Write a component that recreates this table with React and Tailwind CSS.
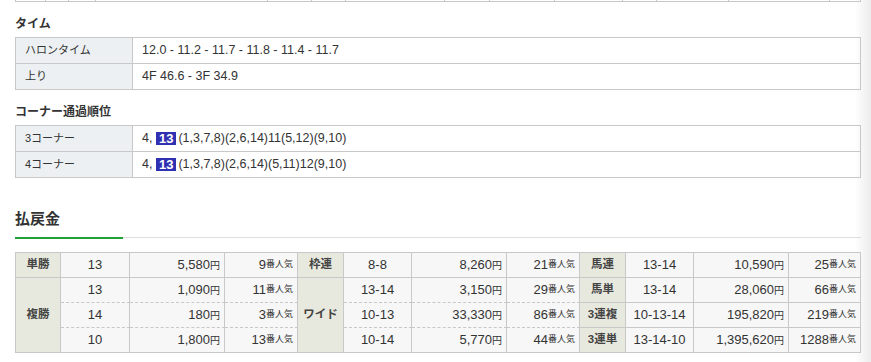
import React from 'react';

// 上の表（見切れている部分）の列幅
const topCols = [30, 23, 27, 172, 44, 34, 99, 45, 65, 68, 34, 72, 101, 31];

const timeRows = [
    { label: 'ハロンタイム', value: '12.0 - 11.2 - 11.7 - 11.8 - 11.4 - 11.7' },
    { label: '上り', value: '4F 46.6 - 3F 34.9' },
];

const cornerRows = [
    { label: '3コーナー', rest: '(1,3,7,8)(2,6,14)11(5,12)(9,10)' },
    { label: '4コーナー', rest: '(1,3,7,8)(2,6,14)(5,11)12(9,10)' },
];

const solid = 'border-r border-b border-[#c8c8c8]';
const dashed = 'border-r border-b border-[#c8c8c8] [border-bottom-style:dashed]';

const Label = ({ children, span }) => (
    <div className={`${solid} bg-[#e8e9de] flex items-center justify-center text-[11.5px] font-bold text-[#444] ${span ? 'row-span-3' : ''}`}>
        {children}
    </div>
);

const Cells = ({ combo, yen, ninki, dash }) => {
    const b = dash ? dashed : solid;
    return (
        <>
            <div className={`${b} bg-[#f7f7f7] flex items-center justify-center text-[13px]`}>{combo}</div>
            <div className={`${b} bg-[#f7f7f7] flex items-center justify-end pr-[4px] text-[13px]`}>
                {yen}<span className="text-[10px]">円</span>
            </div>
            <div className={`${b} bg-[#f7f7f7] flex items-center justify-end pr-[4px] text-[13px]`}>
                {ninki}<span className="text-[9px]">番人気</span>
            </div>
        </>
    );
};

const InfoTable = ({ rows, render }) => (
    <div className="border-t border-l border-[#c8c8c8] w-[846px]">
        {rows.map((r) => (
            <div key={r.label} className="flex h-[26px] border-b border-r border-[#c8c8c8]">
                <div className="w-[117px] border-r border-[#c8c8c8] bg-[#edf0f2] flex items-center pl-[9px] text-[11px]">
                    {r.label}
                </div>
                <div className="flex-1 flex items-center pl-[9px] text-[12.5px]">{render(r)}</div>
            </div>
        ))}
    </div>
);

const App = () => {
    return (
        <div
            className="w-[871px] h-[362px] overflow-hidden bg-[linear-gradient(to_right,#ffffff_855px,#ececec_871px)] text-[#333] pl-[15px]"
            style={{ fontFamily: '"Liberation Sans", "Noto Sans CJK JP", sans-serif' }}
        >
            {/* 上の表の下端 */}
            <div className="flex w-[846px]">
                {topCols.map((w, i) => (
                    <div
                        key={i}
                        className={`h-[2px] border-l border-b border-[#c8c8c8] ${i === topCols.length - 1 ? 'border-r' : ''}`}
                        style={{ width: w + (i === topCols.length - 1 ? 1 : 0) }}
                    />
                ))}
            </div>

            {/* タイム */}
            <h3 className="mt-[14px] mb-[5px] leading-[16px] text-[12px] font-bold">タイム</h3>
            <InfoTable rows={timeRows} render={(r) => r.value} />

            {/* コーナー通過順位 */}
            <h3 className="mt-[14px] mb-[5px] leading-[16px] text-[12px] font-bold">コーナー通過順位</h3>
            <InfoTable
                rows={cornerRows}
                render={(r) => (
                    <span className="flex items-center">
                        4,&nbsp;
                        <span className="inline-flex items-center h-[13px] bg-[#3030b2] text-white font-bold px-[3px] text-[13px] mr-[2px]">13</span>
                        {r.rest}
                    </span>
                )}
            />

            {/* 払戻金 */}
            <h2 className="mt-[31px] leading-[20px] text-[15px] font-bold">払戻金</h2>
            <div className="mt-[8px] flex items-start w-[846px]">
                <div className="w-[108px] h-[2px] bg-[#22a038]" />
                <div className="flex-1 h-px bg-[#dddddd]" />
            </div>

            <div className="mt-[13px] w-[846px] border-t border-l border-[#c8c8c8] grid grid-cols-[45px_69px_95px_73px_46px_68px_95px_73px_46px_68px_95px_72px] grid-rows-[25px_25px_25px_25px]">
                <Label>単勝</Label>
                <Cells combo="13" yen="5,580" ninki="9" />
                <Label>枠連</Label>
                <Cells combo="8-8" yen="8,260" ninki="21" />
                <Label>馬連</Label>
                <Cells combo="13-14" yen="10,590" ninki="25" />

                <Label span>複勝</Label>
                <Cells combo="13" yen="1,090" ninki="11" dash />
                <Label span>ワイド</Label>
                <Cells combo="13-14" yen="3,150" ninki="29" dash />
                <Label>馬単</Label>
                <Cells combo="13-14" yen="28,060" ninki="66" />

                <Cells combo="14" yen="180" ninki="3" dash />
                <Cells combo="10-13" yen="33,330" ninki="86" dash />
                <Label>3連複</Label>
                <Cells combo="10-13-14" yen="195,820" ninki="219" />

                <Cells combo="10" yen="1,800" ninki="13" />
                <Cells combo="10-14" yen="5,770" ninki="44" />
                <Label>3連単</Label>
                <Cells combo="13-14-10" yen="1,395,620" ninki="1288" />
            </div>
        </div>
    );
};

export default App;
